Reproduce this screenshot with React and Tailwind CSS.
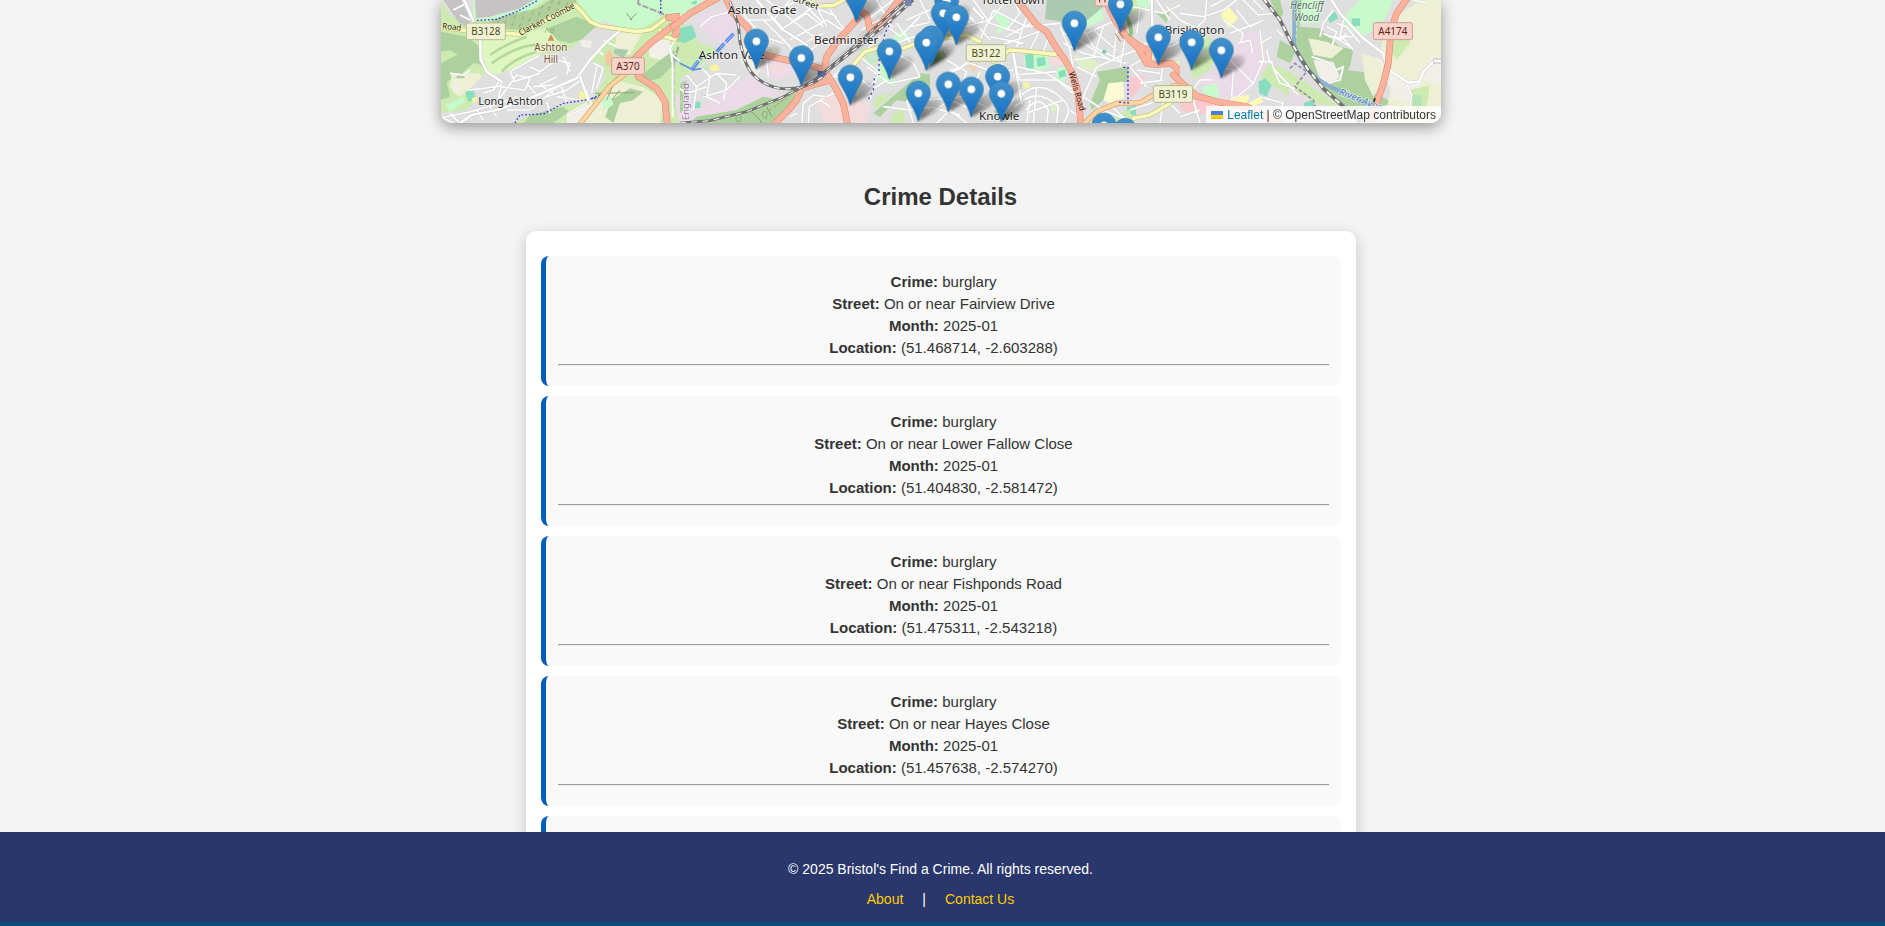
import React from "react";

// Land cover, in map tile units (three units per pixel).
const AREAS_WEST = [
  ["#cdebb0", "M0 0H800V369H0Z"],
  ["#c8facc", "M120 0L345 0L300 30L200 60L125 62ZM440 0H690L700 45L640 85L560 95L500 75L470 40Z"],
  ["#b0cf9c", "M160 75L210 50L320 25L360 0H440L430 20L270 90L200 85Z"],
  ["#e0dfdf", "M33 0H130L128 90L110 75L95 60L60 45Z"],
  ["#c5c3c3", "M40 0H95L125 60L110 80L88 70ZM135 0H310L270 25L180 50L138 55Z"],
  ["#add19e", "M33 95L110 110L150 140L165 200L110 180L60 150L33 155ZM33 190L90 160L150 160L130 190L90 225L50 245L60 290L33 300ZM350 85L440 50L500 75L480 110L420 130L380 120ZM480 70L540 95L525 110L480 105ZM625 235L690 180L735 150L735 190L690 235L650 245ZM715 70L780 62V130L740 125Z"],
  ["#def6c0", "M165 85L260 100L350 85L390 130L330 160L270 195L215 235L170 210L150 170Z"],
  ["#eef0d5", "M65 220H150L160 250L120 275L85 290L60 262ZM465 330L560 240L640 262L700 300L690 369H455ZM560 100L640 95L600 165L555 150Z"],
  ["#e0dfdf", "M120 265L165 220L180 230L250 205L330 165L420 150L520 60L590 90L520 130L475 180L520 195L525 235L490 295L450 310L380 320L330 340L240 369H33V340L110 330L140 300Z"],
  ["#aacbaf", "M555 145L595 150L580 175L550 160Z"],
  ["#f2efe9", "M655 130L690 120L722 118L718 160L690 180L658 170ZM65 260L82 250L88 272L72 280ZM450 120L488 122L480 145L455 140ZM410 340L470 305L485 325L455 369H410Z"],
  ["#add19e", "M525 350L545 300L600 265L640 275L610 300L570 310L550 369ZM280 369L300 345L400 320L415 335L370 369Z"],
  ["#f3c7a0", "M525 165L540 148L553 175L545 200L528 195Z"],
  ["#88ddbe", "M105 275L130 270L140 300L115 305ZM706 8L715 0H730L725 20ZM740 30L760 25V40H740ZM765 0H780V25Z"],
  ["#c8facc", "M45 315L100 290L105 305L60 335ZM515 295L545 290L550 315L520 330ZM695 0H780V45H700Z"],
  ["#ebdbe8", "M735 290L780 250V369H745Z"],
  ["#f7f7a0", "M125 295L140 290V305L128 308ZM445 280L465 270L470 295L450 300Z"],
];

const AREAS_ASHTON = [
  ["#e0dfdf", "M0 0H800V369H0Z"],
  ["#cdebb0", "M0 60L60 130L120 150L80 180L40 215L0 235Z"],
  ["#c8facc", "M0 0H70L40 50L0 65ZM640 110L670 85L690 110L650 135ZM590 200L620 180L650 260L590 240Z"],
  ["#88ddbe", "M0 85L35 75L50 110L15 130L0 125ZM45 305H62V325H45ZM30 10L50 0V14Z"],
  ["#ebdbe8", "M45 60L75 35L150 20L170 60L160 120L140 140L90 110ZM170 250L210 220L260 260L310 285L240 290L150 335L60 350L0 362V340L60 325ZM225 170L330 190L350 220L290 240L250 220Z"],
  ["#f2efe9", "M175 120L240 160L250 200L225 235L185 190Z"],
  ["#add19e", "M50 350L170 330L250 290L300 300L335 265L350 290L300 345L280 369H30ZM580 340L650 280L720 220L780 225V285L700 310L650 300L600 350ZM0 250L20 240L10 330L0 340Z"],
  ["#cdebb0", "M580 300L600 285L640 280L585 330ZM640 340L670 320L675 369H630Z"],
  ["#f5dcdc", "M410 300L440 280L500 300L570 310L560 369H430ZM270 190L320 200V220H275Z"],
  ["#f7f3a5", "M85 200L110 190L120 210L95 215ZM275 140L290 150L280 160Z"],
  ["#c8e9c9", "M555 165L600 150L605 180L560 200ZM520 130L560 100L555 150L530 160ZM65 200L85 190L90 205L70 212Z"],
  ["#d2d1d1", "M560 70L660 0H700L610 100L540 150L430 210L440 190L520 130Z"],
  ["#eef0d5", "M510 245L540 260L535 290L515 285Z"],
];

const AREAS_KNOWLE = [
  ["#e0dfdf", "M0 0H800V369H0Z"],
  ["#aacbaf", "M350 0H515L520 20L470 62L400 65L345 58Z"],
  ["#c8facc", "M180 30L230 50L245 75L200 105L205 70ZM470 62L515 25L520 60L470 80ZM620 0L665 0L655 30L620 20ZM280 165L350 160L360 205L290 215ZM380 205L415 195L405 245L375 240Z"],
  ["#88ddbe", "M285 165L310 160L312 205L290 207ZM320 175L345 170L348 195L322 200ZM385 215L405 208L408 228L388 235ZM590 320L618 318V345H592Z"],
  ["#add19e", "M500 215L595 200V245L545 250L520 300L485 330L480 310L510 240ZM190 330L240 340L235 360L200 355ZM0 165L40 150L50 170L0 200ZM680 40L720 30L710 70Z"],
  ["#fbfbd8", "M535 250L580 245L582 295L540 310L520 300Z"],
  ["#f9c9cf", "M600 230L645 225L640 250L605 295L592 270Z"],
  ["#f5dcdc", "M360 170L400 168L392 195L365 200ZM600 300L640 290L650 305L600 315Z"],
  ["#f3d2b2", "M115 195L145 190L140 210L125 215Z"],
  ["#f7f3a5", "M278 248L298 246V265H280ZM180 195L200 190L190 205ZM655 170L670 165V185H657Z"],
  ["#ddf0c8", "M430 165L490 180L520 200L490 215L450 205ZM355 310L380 300L390 325L365 335ZM720 190L780 170V220L740 230Z"],
  ["#cdebb0", "M530 0L620 0L625 40L575 45ZM560 340L600 330L610 369H555Z"],
];

const AREAS_EAST = [
  ["#e0dfdf", "M0 0H810V369H0Z"],
  ["#cdebb0", "M270 190L330 215L400 265L480 320L400 310L340 300L300 270L240 230ZM30 200L60 170L110 150L90 210L40 240ZM60 120L90 110L100 140L70 160Z"],
  ["#ebdbe8", "M170 130L215 85L250 120L260 190L220 260L160 310L105 290L50 240L90 220L150 170ZM325 260L390 300L370 320L330 300Z"],
  ["#c8facc", "M500 40L540 0H640L600 85L540 110L490 70ZM330 0H420V70H350ZM65 260L110 250L120 290L80 300Z"],
  ["#fbfbb5", "M122 45L145 20L175 55L145 85ZM205 310L240 290L250 305L215 320ZM155 290L210 285L200 310L150 300Z"],
  ["#88ddbe", "M440 50L465 35L475 55L450 70ZM515 55L540 55V78H515ZM235 245L255 235L275 255L260 290L238 280ZM370 310L395 300L410 325H375Z"],
  ["#add19e", "M270 0H300L310 40L300 60ZM335 0H365L360 80L420 85L480 140L520 150L510 200L480 240L440 265L400 240L365 170L340 120ZM450 245L500 210L580 220L570 270L640 310L560 330L490 320L420 270ZM300 120L350 150L330 190L290 170ZM690 20L730 0H810V15L740 30Z"],
  ["#eef0d5", "M385 115L440 125L490 145L455 175L400 165ZM545 160L610 180L620 230L580 290L555 240ZM650 50L720 0L810 0V369H610L640 240L600 160L620 80Z"],
  ["#f2efe9", "M400 180L460 185L480 230L450 255L420 240ZM590 170L625 200L690 250L720 260L700 310L640 290ZM750 170L810 175V260L730 240Z"],
  ["#f9c9cf", "M0 280L60 285L110 320L60 345L0 330Z"],
  ["#cdebb0", "M640 110L680 90L690 130L650 180L630 150ZM690 270L750 255L740 320H690Z"],
  ["#b5e3b5", "M695 285H725V318H700Z"],
];

const STREETS_WEST =
  "M98 0L130 70L155 110L150 160L170 215L215 245L205 300M40 352L120 335L210 310L260 290M205 300L260 225L300 235L285 270L210 260M120 270L215 258M230 330L300 330L370 270L420 245M330 220L250 245M300 200L330 215L380 180L420 190L410 225M250 235L240 215L330 165M350 290L410 270L455 240M350 305L360 340M395 260L410 310M470 270L485 315L430 340M450 230L470 290M500 200L485 280M520 205L500 265M490 190L520 205M500 150L520 165M520 120L560 140M33 350L70 369M60 340L90 369M140 330L160 360M180 320L200 350M60 220L100 225L120 210M380 290L450 300M400 170L420 215M210 240L190 270L160 280M270 290L300 320M70 30L110 10M90 45L120 60M310 260L370 255M320 285L290 250M380 230L330 255L370 280";
const STREETS_ASHTON =
  "M60 80L95 50L150 35M20 225L50 260L40 330M50 260L110 220L170 225M60 200L90 230L80 290L120 310M110 220L140 250L130 300M180 230L140 270L70 290M20 280L80 260M250 60L330 140L345 170M200 60L280 60L330 0M260 0L400 110M290 30L360 0M330 70L400 20L470 50M300 90L380 40L430 80M330 120L440 60L500 100M400 0L440 80M450 30L500 100M350 140L430 100M380 160L430 120L480 140M370 10L430 70M240 90L260 150M170 20L250 110L310 130M545 90L600 60L640 80M600 110L560 150M540 170L600 220L570 260L520 220M620 140L700 110L770 150M650 160L700 190L720 230M670 150L720 130L770 190M600 60L660 110L720 50M680 60L770 20M690 80L780 60M720 0L770 100M650 70L700 140M365 369L370 310L400 285L435 290M385 369L388 320L430 295M330 350L350 340M420 300L450 320M440 230L490 230M260 180L265 230M450 240L480 210L530 240M560 200L630 250L720 230M590 230L570 300M610 320L690 330L750 320M680 300L700 369M720 300L770 350M640 0L560 60M590 0L630 70M560 280L620 240M0 265L30 290L20 320M440 290L480 270";
const STREETS_KNOWLE =
  "M130 0L180 70L270 100M100 80L180 60L230 0M150 120L190 30L290 80L390 70M230 110L320 60M180 110L280 130M200 140L340 90M120 50L180 120M290 50L260 140M330 90L300 150M360 100L340 155M250 0L270 40L230 90M60 210L120 190L200 220L250 210M50 180L110 215L90 270M150 215L130 260M210 170L250 300L210 360M250 170L270 240L380 240L430 280M260 200L350 220L430 270M250 225L380 215M270 290Q330 230 400 300Q430 330 400 369M255 320Q320 255 385 320L380 369M290 330Q325 280 355 330L350 369M310 369L320 260M290 369L300 300M400 300L290 340M0 300L100 290L170 320M0 340L60 300L130 330M20 369L60 330L110 369M0 320L90 345M400 100L470 100L560 60M430 110L540 180L620 150M400 130L460 160L590 190M390 80L420 150L430 210M450 70L490 140L570 180M490 90L560 150M520 80L490 170M560 90L550 180L500 200M590 90L570 200M500 200L460 290L440 350M440 200L500 230M460 290L520 330L620 369M520 330L510 369M545 320L600 369M600 330L720 290M610 20L700 40L780 0M660 0L670 110M630 30L620 100M640 130L720 140L780 110M650 170L600 200L650 260M700 190L690 250M620 210L690 220M630 250L700 240M720 230L770 260M650 350L720 310L750 340M690 369L700 300M710 20L770 80M720 60L680 0M420 330L470 369M430 180L500 170";
const STREETS_EAST =
  "M80 0L75 60L30 100M0 40L70 50L130 30L170 0M90 20L130 0M170 30L210 80L250 60M190 0L235 45L280 40M220 0L250 30M150 100L230 70M130 60L190 100L180 130M175 130L210 120L218 160M240 90L250 180L220 250L160 300M235 185L275 185L280 205L355 285M260 150L270 190M150 180L220 250M110 200L160 210L155 290M100 240L60 240L35 275M0 350L60 330M280 205L300 250L345 265M275 110L240 130M290 90L310 110M395 170L440 185L470 210L490 200L480 240L440 250M430 100L450 110L490 115L520 150M460 30L430 70L420 110M490 60L480 110L520 110M500 80L540 130M440 80L470 95L455 140M460 110L510 140M470 70L500 80M680 250L695 285L690 320M695 260L720 250M240 290L310 310L290 340M0 130L40 180M40 300L60 369M0 60L60 90M480 120L500 100M700 0L740 10";

function Streets({ d }) {
  return (
    <g fill="none" strokeLinejoin="round">
      <path d={d} stroke="#cfcece" strokeWidth="6.6" />
      <path d={d} stroke="#ffffff" strokeWidth="4.8" />
    </g>
  );
}

function Road({ d, kind }) {
  const styles = {
    primary: ["#e68068", "#f9b29c", 20, 17],
    trunk: ["#d98a4a", "#fcd6a4", 15, 12],
    secondary: ["#c3b95c", "#f7fabf", 14, 11],
    minor: ["#bfbfbf", "#ffffff", 10, 8],
  };
  const [edge, fill, outer, inner] = styles[kind];
  return (
    <g fill="none" strokeLinejoin="round" strokeLinecap="round">
      <path d={d} stroke={edge} strokeWidth={outer} />
      <path d={d} stroke={fill} strokeWidth={inner} />
    </g>
  );
}

function Rail({ d, width = 8 }) {
  return (
    <g fill="none">
      <path d={d} stroke="#707070" strokeWidth={width} />
      <path d={d} stroke="#ffffff" strokeWidth={width - 5} strokeDasharray="17 17" />
    </g>
  );
}

function Areas({ list }) {
  return list.map(([fill, d], i) => <path key={i} d={d} fill={fill} />);
}

function Place({ x, y, w, children, size = 35, fill = "#222222", italic = false, halo = "#ffffff" }) {
  return (
    <text
      x={x}
      y={y}
      textLength={w}
      lengthAdjust="spacingAndGlyphs"
      fontSize={size}
      fill={fill}
      fontStyle={italic ? "italic" : "normal"}
      stroke={halo}
      strokeOpacity="0.6"
      strokeWidth="5"
      strokeLinejoin="round"
      paintOrder="stroke"
    >
      {children}
    </text>
  );
}

function Shield({ x, y, w, h = 50, red, textWidth, children }) {
  return (
    <g>
      <rect x={x} y={y} width={w} height={h} rx="5" fill={red ? "#f6d5cd" : "#f0f2d5"} stroke={red ? "#d39a8d" : "#b9bb85"} strokeWidth="3" />
      <text
        x={x + (w - textWidth) / 2}
        y={y + h / 2 + 10.5}
        textLength={textWidth}
        lengthAdjust="spacingAndGlyphs"
        fontSize="30"
        fill={red ? "#6b1d10" : "#4b4c11"}
      >
        {children}
      </text>
    </g>
  );
}

// Tip positions of the pins, back to front.
const PINS = [
  [1246, 66], [1517, 85], [2038, 96], [1507, 123], [1546, 135], [1900, 153],
  [1472, 197], [2152, 195], [946, 207], [1456, 211], [2252, 210], [2341, 234],
  [1345, 237], [1081, 257], [1670, 313], [1228, 315], [1522, 336], [1591, 351],
  [1432, 363], [1681, 364], [1989, 459], [2053, 475],
];

function Pin({ x, y }) {
  return (
    <g transform={`translate(${x - 37.5} ${y - 121}) scale(3)`}>
      <path
        d="M12.5 .6C5.900 .6.6 5.900.6 12.500c0 2.600.9 4.800 2.100 7C5.500 24.500 10 31.500 12.500 40.300 15 31.500 19.500 24.500 22.300 19.500c1.200-2.200 2.100-4.400 2.100-7C24.400 5.900 19.100.6 12.500.6Z"
        fill="url(#pinFill)"
        stroke="url(#pinEdge)"
        strokeWidth="1"
        strokeLinejoin="round"
      />
      <circle cx="12.5" cy="12.600" r="4.300" fill="#ffffff" stroke="#2c76ad" strokeWidth=".7" />
    </g>
  );
}

function CityMap() {
  const west = "translate(-33 0)";
  const ashton = "translate(717 0)";
  const knowle = "translate(1467 0)";
  const east = "translate(2217 0)";
  return (
    <svg className="block h-[123px] w-[1000px]" viewBox="0 0 3000 369" fontFamily="'Noto Sans', sans-serif">
      <defs>
        <linearGradient id="pinFill" x1="0" y1="0" x2="0" y2="1">
          <stop offset="0" stopColor="#4292cb" />
          <stop offset="1" stopColor="#126fc6" />
        </linearGradient>
        <linearGradient id="pinEdge" x1="0" y1="0" x2="0" y2="1">
          <stop offset="0" stopColor="#3c86bb" />
          <stop offset="1" stopColor="#2e6c97" />
        </linearGradient>
        <linearGradient id="pinShade" x1="0" y1="1" x2="1" y2="0">
          <stop offset="0" stopColor="#000000" stopOpacity="0.85" />
          <stop offset="1" stopColor="#000000" stopOpacity="0.1" />
        </linearGradient>
        <filter id="soft" x="-10%" y="-20%" width="120%" height="140%">
          <feGaussianBlur stdDeviation="5" />
        </filter>
        <pattern id="heath" width="34" height="30" patternUnits="userSpaceOnUse" patternTransform="rotate(-30)">
          <path d="M4 10L14 4M20 24L30 18" stroke="#87a973" strokeWidth="3" />
        </pattern>
      </defs>

      <g transform={west}>
        <Areas list={AREAS_WEST} />
        <path d="M160 75L320 25L360 0H440L430 20L270 90Z" fill="url(#heath)" />
        <path d="M185 190Q270 130 330 135M180 165Q230 130 290 110M215 215Q250 175 320 155" stroke="#b6d99b" strokeWidth="8" fill="none" />
        <path d="M75 235L95 215L105 235ZM80 205L100 205L95 235Z" fill="#add19e" />
        <Streets d={STREETS_WEST} />
        <path d="M495 280L615 278M570 270L545 300M560 230L530 300M600 60L620 40M590 40L605 60" stroke="#8ea36d" strokeWidth="3" fill="none" />
        <path d="M625 0V12L715 48L780 35M745 140L730 200V320" stroke="#9b8f9b" strokeWidth="6" strokeDasharray="20 5" opacity=".8" fill="none" />
        <path d="M130 62L200 58L260 35L325 0M255 369L270 345L340 342L400 310L480 298L520 280M692 0V45M470 298L510 292" fill="none" stroke="#3434e8" strokeWidth="4" strokeDasharray="5 6" />
        <path d="M715 148Q735 185 780 205" stroke="#84a9e8" strokeWidth="6" fill="none" />
        <path d="M715 148Q735 180 770 195M735 120L720 145L728 190V350" stroke="#fff" strokeWidth="6" fill="none" />
        <Road kind="minor" d="M103 0L130 62M151 115L152 178L170 215L215 245M90 369L125 345L200 330L300 295L370 265L440 235L480 180L530 125L570 92" />
        <Road kind="minor" d="M450 230L475 300" />
        <Road kind="secondary" d="M25 80L110 92L270 103L435 15L455 35L480 65L510 78L620 95L665 88L712 52M690 90L705 110L735 118L745 90" />
        <Road kind="trunk" d="M440 385L540 258L605 205" />
        <Road kind="primary" d="M605 185L660 130L745 65L800 35M625 230L680 265L705 305L713 385M800 90L745 55L715 53L760 48L800 50M735 105L765 60" />
      </g>

      <g transform={ashton}>
        <Areas list={AREAS_ASHTON} />
        <Streets d={STREETS_ASHTON} />
        <path d="M35 210L65 170M110 155L165 97" stroke="#5e8fe8" strokeWidth="11" strokeDasharray="34 6" fill="none" />
        <path d="M0 190L40 210L65 205" stroke="#5e8fe8" strokeWidth="5" fill="none" />
        <path d="M37 205L60 174M120 145L160 103" stroke="#a3c5ff" strokeWidth="3" fill="none" />
        <path d="M641 50L615 100L597 180V225M583 235L580 270L565 300" fill="none" stroke="#3040e0" strokeWidth="4" strokeDasharray="6 9" />
        <Road kind="minor" d="M230 0L270 45L310 90L380 135" />
        <Road kind="secondary" d="M375 0L415 18L460 17L510 -10M520 195L555 155L610 138L670 145L730 120" />
        <Road kind="primary" d="M-20 80L30 40L80 12L130 -15M140 0L160 40L205 85L215 120L250 165L330 182L385 195L420 205L430 215M270 385L325 330L350 300L365 265L450 240M435 195L440 170L475 120L530 60M530 30L560 45L570 90L605 70L665 -10M430 205L465 260L490 310L505 385" />
        <Rail width={9} d="M150 5L175 75L180 125L190 165Q205 230 265 255Q310 275 370 260Q420 245 440 215L490 175L610 80L700 0" />
        <Rail width={8} d="M0 369L90 362L200 335L300 295L360 265L410 235L500 160L600 70L690 -10" />
        <rect x="413" y="213" width="19" height="18" fill="#5b6fa8" />
        <rect x="675" y="-4" width="19" height="22" fill="#7b82b4" />
        <path d="M290 315L330 285M270 330L310 300" stroke="#c39556" strokeWidth="3" strokeDasharray="7 8" />
        <path d="M200 330Q230 340 245 369M260 320L275 350" stroke="#7fa06c" strokeWidth="3" fill="none" />
      </g>

      <g transform={knowle}>
        <Areas list={AREAS_KNOWLE} />
        <Streets d={STREETS_KNOWLE} />
        <Road kind="minor" d="M40 225L90 205L150 155M250 160L275 310M665 0L668 110M130 25L160 55" />
        <Road kind="secondary" d="M-20 125L35 115L110 105L150 125M190 185L240 150L300 155L375 163L390 155M610 355L660 345L720 310" />
        <Road kind="primary" d="M265 5L300 50L320 75L350 95L380 145L405 180L430 225L445 280L453 385M525 0L555 60L590 110L625 145L650 190L680 193L725 190L760 225L800 270M590 110L630 140L655 150L655 180" />
        <Road kind="trunk" d="M465 369L500 335L560 310L630 308L670 285L730 258L780 250" />
        <path d="M555 100L572 125M565 95L580 115" stroke="#b5763c" strokeWidth="3" />
        <path d="M580 202H594V310L560 305" stroke="#3434e8" strokeWidth="4" strokeDasharray="6 7" fill="none" />
        <path d="M590 50Q610 90 600 110" stroke="#91bf84" strokeWidth="12" fill="none" />
        <circle cx="523" cy="155" r="6" fill="#6ccdb0" />
      </g>

      <g transform={east}>
        <Areas list={AREAS_EAST} />
        <Streets d={STREETS_EAST} />
        <Road kind="minor" d="M455 0L480 40L550 115L610 160L620 205L685 248L718 245L730 215L765 180L810 188" />
        <path d="M760 178V190H800V176ZM618 175L612 205" stroke="#bbb" strokeWidth="2" fill="none" />
        <path d="M345 -5L342 130Q355 185 400 225Q440 262 500 280L600 335" stroke="#8cb0cf" strokeWidth="12" fill="none" />
        <path d="M352 30L348 120" stroke="#d4e6f4" strokeWidth="3" strokeDasharray="10 8" />
        <Rail width={11} d="M250 -5L300 60L335 130L385 210L430 265L490 320L545 369" />
        <path d="M330 205L345 190L380 215L345 260L400 300L405 320" stroke="#a08bac" strokeWidth="5" strokeDasharray="11 6" fill="none" />
        <Road kind="primary" d="M-20 225L20 262L50 288L110 305L200 320L300 369M685 -10L650 40L633 90L625 190L610 250L590 310L565 385" />
        <path d="M580 310L585 295" stroke="#222" strokeWidth="5" />
      </g>

      <g transform={west}>
        <g transform="rotate(6 36 86)">
          <Place x={36} y={86} w={57} size={25} halo="#f7fabf">Road</Place>
        </g>
        <Shield x={109} y={69} w={117} textWidth={87}>B3128</Shield>
        <g transform="rotate(-27 270 108)">
          <Place x={272} y={108} w={184} size={26} halo="#f7fabf">Clarken Coombe</Place>
        </g>
        <path d="M345 98L351 84L357 98M362 87H371V98H362Z" fill="none" stroke="#7da66c" strokeWidth="2" />
        <path d="M363 103L373 122H353Z" fill="#d08f55" />
        <Place x={313} y={154} w={99} size={30} fill="#7b4b33">Ashton</Place>
        <Place x={341} y={190} w={43} size={30} fill="#7b4b33">Hill</Place>
        <Shield x={545} y={173} w={98} red textWidth={70}>A370</Shield>
        <Place x={145} y={314} w={194} size={33}>Long Ashton</Place>
        <g transform="rotate(-90 776 361)">
          <Place x={776} y={361} w={112} size={28} fill="#97709d">England</Place>
        </g>
      </g>
      <g transform={ashton}>
        <Place x={143} y={41} w={206}>Ashton Gate</Place>
        <g transform="rotate(20 345 -2)">
          <Place x={340} y={4} w={80} size={25}>Street</Place>
        </g>
        <Place x={56} y={177} w={197}>Ashton Vale</Place>
        <Place x={402} y={131} w={193}>Bedminster</Place>
        <text x="165" y="366" fontSize="26" fill="#85a77a">O</text>
        <text x="245" y="354" fontSize="24" fill="#85a77a">Q</text>
      </g>
      <g transform={knowle}>
        <Place x={153} y={13} w={190}>Totterdown</Place>
        <Shield x={109} y={134} w={118} textWidth={87}>B3122</Shield>
        <rect x="495" y="-28" width="52" height="46" rx="5" fill="#f6d5cd" stroke="#d39a8d" strokeWidth="3" />
        <path d="M509 -4V7M525 -4V7" stroke="#6b1d10" strokeWidth="3" />
        <g transform="rotate(74 418 218)">
          <Place x={418} y={220} w={120} size={25} halo="#f9b29c">Wells Road</Place>
        </g>
        <Shield x={670} y={257} w={118} textWidth={87}>B3119</Shield>
        <Place x={147} y={359} w={121}>Knowle</Place>
        <Place x={704} y={102} w={179}>Brislington</Place>
      </g>
      <g transform={east}>
        <Place x={330} y={26} w={101} size={30} fill="#4d735b" italic>Hencliff</Place>
        <Place x={343} y={62} w={75} size={30} fill="#4d735b" italic>Wood</Place>
        <Shield x={580} y={68} w={117} h={51} red textWidth={87}>A4174</Shield>
        <g transform="rotate(21 478 282)">
          <Place x={476} y={284} w={140} size={28} fill="#4d80b3" italic>River Avon</Place>
        </g>
      </g>

      <g filter="url(#soft)">
        {PINS.map(([x, y]) => (
          <path key={`${x}-${y}`} d={`M${x} ${y}L${x + 10} ${y - 48}Q${x + 40} ${y - 76} ${x + 68} ${y - 66}Q${x + 80} ${y - 48} ${x + 48} ${y - 26}Z`} fill="url(#pinShade)" opacity=".7" />
        ))}
      </g>
      {PINS.map(([x, y]) => (
        <Pin key={`${x}-${y}`} x={x} y={y} />
      ))}
    </svg>
  );
}

const CRIMES = [
  { street: "On or near Fairview Drive", location: "(51.468714, -2.603288)" },
  { street: "On or near Lower Fallow Close", location: "(51.404830, -2.581472)" },
  { street: "On or near Fishponds Road", location: "(51.475311, -2.543218)" },
  { street: "On or near Hayes Close", location: "(51.457638, -2.574270)" },
];

function CrimeCard({ street, location }) {
  return (
    <li className="h-[130px] shrink-0 rounded-lg border-l-[5px] border-[#005eb8] bg-[#f9f9f9] px-3 pt-[15px] text-center text-[15px] leading-[22px]">
      <p><strong>Crime:</strong> burglary</p>
      <p><strong>Street:</strong> {street}</p>
      <p><strong>Month:</strong> 2025-01</p>
      <p><strong>Location:</strong> {location}</p>
      <div className="mt-[5px] h-0.5 border-t border-b border-t-[#9a9a9a] border-b-[#eeeeee]" />
    </li>
  );
}

export default function App() {
  return (
    <div className="flex h-[926px] flex-col overflow-hidden bg-[#f4f4f4] font-['Liberation_Sans',Arial,sans-serif] text-[#333333]">
      <main className="flex min-h-0 flex-1 flex-col items-center overflow-hidden pr-[3px]">
        <section className="relative h-[123px] w-[1000px] shrink-0 rounded-b-[10px] shadow-[0_4px_15px_rgba(0,0,0,0.4)]">
          <div className="h-full overflow-hidden rounded-b-[10px]">
            <CityMap />
          </div>
          <div className="absolute right-0 bottom-0 flex h-[17px] items-center rounded-br-[10px] bg-white/80 px-[5px] text-xs whitespace-pre text-[#333333]">
            <svg className="mr-1 h-2 w-3" viewBox="0 0 12 8">
              <path fill="#4C7BE1" d="M0 0h12v4H0z" />
              <path fill="#FFD500" d="M0 4h12v3H0z" />
              <path fill="#E0BC00" d="M0 7h12v1H0z" />
            </svg>
            <a className="text-[#0078a8]">Leaflet</a> | © OpenStreetMap contributors
          </div>
        </section>
        <h2 className="mt-[60px] shrink-0 pr-px text-2xl leading-[28px] font-bold">Crime Details</h2>
        <ul className="mt-5 flex w-[830px] shrink-0 flex-col gap-2.5 rounded-[10px] bg-white px-[15px] pt-[25px] pb-6 shadow-[0_4px_15px_rgba(0,0,0,0.2)]">
          {CRIMES.map((crime) => (
            <CrimeCard key={crime.location} {...crime} />
          ))}
          <li className="h-[130px] shrink-0 rounded-lg border-l-[5px] border-[#005eb8] bg-[#f9f9f9]" />
        </ul>
      </main>
      <footer className="relative h-[94px] shrink-0 bg-[#2a376c] pt-[27px] pr-[4px] text-center text-sm text-white">
        <p className="leading-[20px]">© 2025 Bristol's Find a Crime. All rights reserved.</p>
        <nav className="mt-[10px] flex justify-center gap-[19px] leading-[20px]">
          <a className="text-[#ffcc00]">About</a>
          <span>|</span>
          <a className="text-[#ffcc00]">Contact Us</a>
        </nav>
        <div className="absolute inset-x-0 bottom-0 h-1 bg-[#0b4a7a] shadow-[0_-1px_1px_#1a416f]" />
      </footer>
    </div>
  );
}
